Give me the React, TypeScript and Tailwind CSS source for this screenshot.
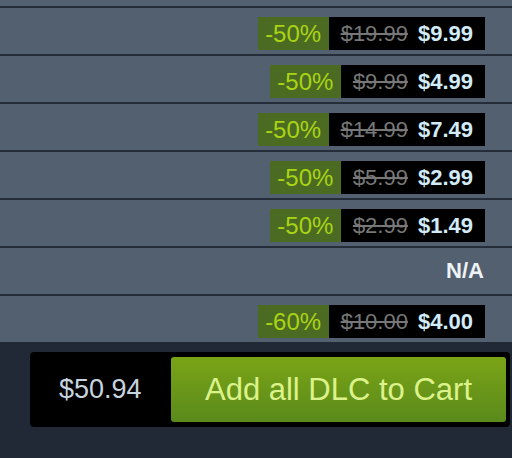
import React from "react";

type Row = { pct?: string; orig?: string; final?: string };

const rows: Row[] = [
    { pct: "-50%", orig: "$19.99", final: "$9.99" },
    { pct: "-50%", orig: "$9.99", final: "$4.99" },
    { pct: "-50%", orig: "$14.99", final: "$7.49" },
    { pct: "-50%", orig: "$5.99", final: "$2.99" },
    { pct: "-50%", orig: "$2.99", final: "$1.49" },
    {},
    { pct: "-60%", orig: "$10.00", final: "$4.00" },
];

const PriceRow: React.FC<{ row: Row }> = ({ row }) => {
    if (!row.pct) {
        return (
            <div className="h-[48px] border-t-2 border-[#242d39] bg-[#536070] flex items-center justify-end pr-[28px]">
                <span className="text-[22px] font-bold text-[#eef3f7] leading-none">N/A</span>
            </div>
        );
    }
    return (
        <div className="h-[48px] border-t-2 border-[#242d39] bg-[#536070] flex items-start justify-end pt-[9px] pr-[27px]">
            <div className="flex h-[33px]">
                <div className="w-[71px] bg-[#4c6b22] text-[#a8d414] text-[24px] leading-none flex items-center justify-center">
                    {row.pct}
                </div>
                <div className="bg-black flex items-center gap-[10px] px-[12px] text-[22px] leading-none">
                    <span className="text-[#777777] line-through">{row.orig}</span>
                    <span className="text-[#d2ebf8] font-bold">{row.final}</span>
                </div>
            </div>
        </div>
    );
};

const App: React.FC = () => {
    return (
        <div className="w-[512px] h-[458px] overflow-hidden bg-[#212937] font-['Liberation_Sans',Arial,sans-serif]">
            <div className="h-[6px] bg-[#536070]" />
            {rows.map((row, i) => (
                <PriceRow key={i} row={row} />
            ))}
            <div className="ml-[30px] mt-[10px] w-[480px] h-[75px] bg-black rounded-[4px] flex items-center pl-[29px] pr-[4px]">
                <span className="text-[27px] text-[#c6d4df] leading-none">$50.94</span>
                <button className="ml-auto w-[335px] h-[65px] rounded-[3px] bg-gradient-to-b from-[#7aa416] to-[#5a8a1b] text-[31px] text-[#dcf28a] leading-none flex items-center justify-center">
                    Add all DLC to Cart
                </button>
            </div>
        </div>
    );
};

export default App;
